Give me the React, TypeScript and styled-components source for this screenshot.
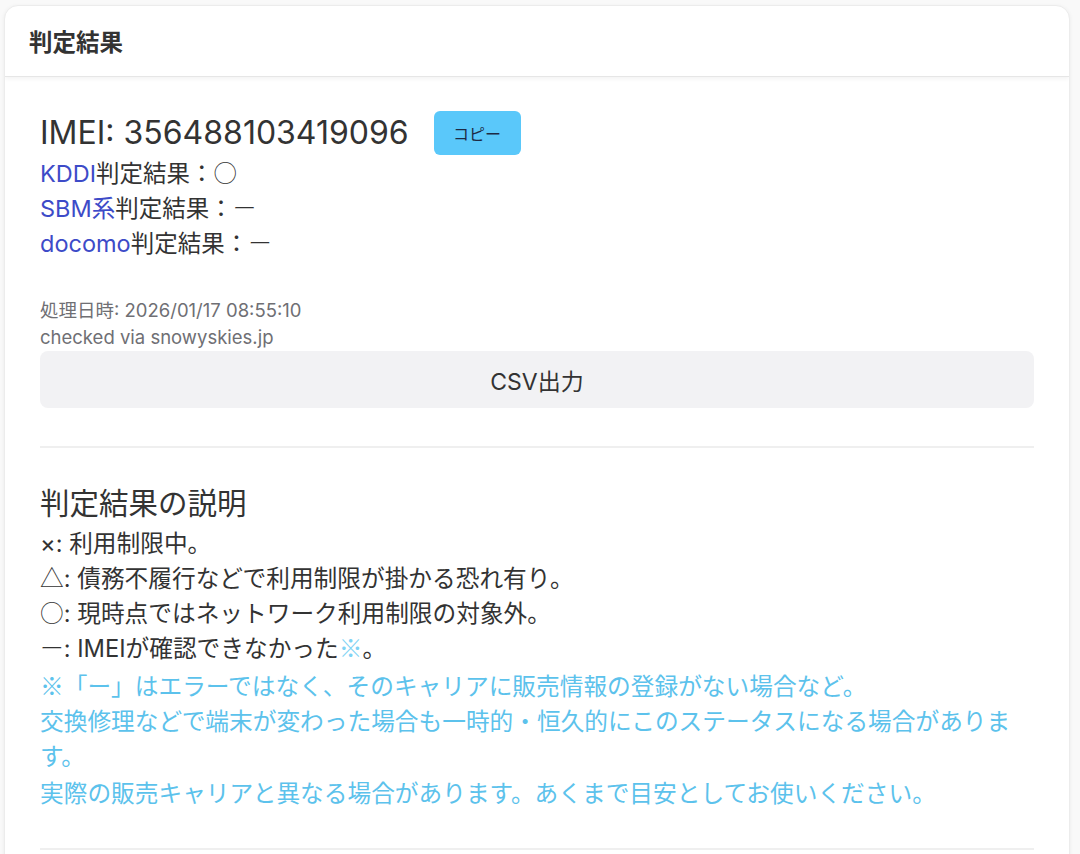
import React from "react";
import styled, { createGlobalStyle } from "styled-components";

const GlobalStyle = createGlobalStyle`
  html, body {
    margin: 0;
    padding: 0;
    background: #f9f9f9;
  }
  body {
    font-family: Inter, "Noto Sans CJK JP", sans-serif;
    color: #333;
  }
`;

const App = () => {
  return (
    <>
      <GlobalStyle />
      <Page>
        <Card>
          <CardHeader>判定結果</CardHeader>
          <CardBody>
            <ImeiRow>
              <Imei>IMEI: 356488103419096</Imei>
              <CopyButton>コピー</CopyButton>
            </ImeiRow>
            <ResultLine>
              <Carrier>KDDI</Carrier>判定結果：<Mark>○</Mark>
            </ResultLine>
            <ResultLine>
              <Carrier>SBM系</Carrier>判定結果：<Mark>ー</Mark>
            </ResultLine>
            <ResultLine>
              <Carrier>docomo</Carrier>判定結果：<Mark>ー</Mark>
            </ResultLine>

            <Meta>
              <MetaLine>処理日時: 2026/01/17 08:55:10</MetaLine>
              <MetaLine>checked via snowyskies.jp</MetaLine>
            </Meta>
            <CsvButton>CSV出力</CsvButton>

            <Divider />

            <SectionTitle>判定結果の説明</SectionTitle>
            <Legend>
              <LegendLine>×: 利用制限中。</LegendLine>
              <LegendLine>
                <Mark>△</Mark>: 債務不履行などで利用制限が掛かる恐れ有り。
              </LegendLine>
              <LegendLine>
                <Mark>○</Mark>: 現時点ではネットワーク利用制限の対象外。
              </LegendLine>
              <LegendLine>
                <Mark>ー</Mark>: IMEIが確認できなかった<Note>※</Note>。
              </LegendLine>
            </Legend>
            <Notes>
              <NoteLine $gap={2}>
                ※「ー」はエラーではなく、そのキャリアに販売情報の登録がない場合など。
              </NoteLine>
              <NoteLine>
                交換修理などで端末が変わった場合も一時的・恒久的にこのステータスになる場合があります。
              </NoteLine>
              <NoteLine $gap={2}>
                実際の販売キャリアと異なる場合があります。あくまで目安としてお使いください。
              </NoteLine>
            </Notes>

            <Divider />
          </CardBody>
        </Card>
      </Page>
    </>
  );
};

export default App;

const Page = styled.div`
  padding: 5px 10px 0 4px;
`;

const Card = styled.div`
  background: #fff;
  border: 1px solid #ececec;
  border-radius: 14px;
  box-shadow: 0 1px 4px rgba(0, 0, 0, 0.06);
  overflow: hidden;
`;

const CardHeader = styled.div`
  display: flex;
  align-items: center;
  height: 70px;
  padding: 0 24px;
  font-size: 23.5px;
  font-weight: 700;
  color: #333;
  border-bottom: 1px solid #e6e6e6;
  box-shadow: 0 2px 4px rgba(0, 0, 0, 0.05);
`;

const CardBody = styled.div`
  padding: 34px 35px 60px 35px;
`;

const ImeiRow = styled.div`
  display: flex;
  align-items: center;
  gap: 25px;
  margin-bottom: 1px;
`;

const Imei = styled.h2`
  margin: 0;
  font-size: 32px;
  font-weight: 400;
  line-height: 1.2;
  color: #333;
`;

const CopyButton = styled.button`
  width: 87px;
  height: 44px;
  border: none;
  border-radius: 6px;
  background: #5ac8fa;
  color: #1d2a44;
  font-family: "Noto Sans CJK JP", sans-serif;
  font-size: 16px;
  cursor: pointer;
`;

const ResultLine = styled.div`
  font-size: 23.5px;
  line-height: 35px;
`;

const Carrier = styled.span`
  color: #3d4bc8;
`;

const Mark = styled.span`
  font-family: "Noto Sans CJK JP", sans-serif;
  font-weight: 300;
  line-height: 1;
`;

const Meta = styled.div`
  margin-top: 36px;
  color: #6f6f74;
`;

const MetaLine = styled.div`
  font-size: 18.5px;
  line-height: 27px;
`;

const CsvButton = styled.button`
  display: block;
  width: 100%;
  height: 57px;
  border: none;
  border-radius: 8px;
  background: #f2f2f4;
  color: #333;
  font-family: Inter, "Noto Sans CJK JP", sans-serif;
  font-size: 23px;
`;

const Divider = styled.hr`
  margin: 38px 0;
  border: none;
  border-top: 2px solid #efefef;
`;

const SectionTitle = styled.h3`
  margin: 0 0 5px;
  font-size: 29.5px;
  font-weight: 400;
  line-height: 35px;
  color: #333;
`;

const Legend = styled.div`
  font-size: 23.7px;
  line-height: 35px;
`;

const LegendLine = styled.div``;

const Note = styled.span`
  font-family: "Noto Sans CJK JP", sans-serif;
  color: #7fd3f5;
  line-height: 1;
`;

const Notes = styled.div`
  color: #5cc2ec;
  font-family: "Noto Sans CJK JP", sans-serif;
  font-size: 23.7px;
  line-height: 35px;
`;

const NoteLine = styled.div<{ $gap?: number }>`
  margin-top: ${(p) => p.$gap ?? 0}px;
`;
